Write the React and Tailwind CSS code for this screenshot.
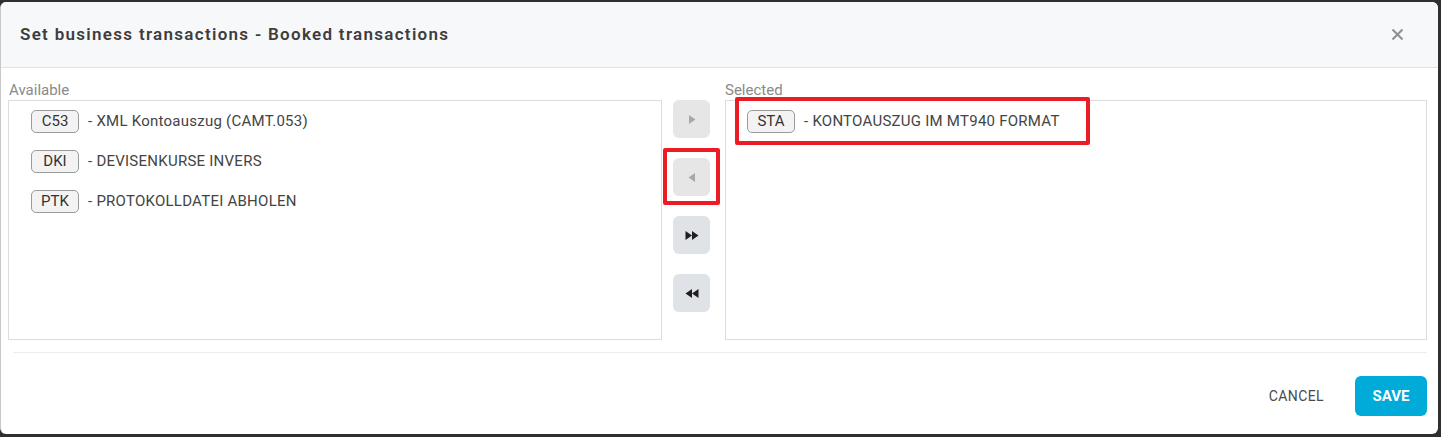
import { useState } from "react";

const available = [
  { code: "C53", label: "XML Kontoauszug (CAMT.053)" },
  { code: "DKI", label: "DEVISENKURSE INVERS" },
  { code: "PTK", label: "PROTOKOLLDATEI ABHOLEN" },
];

const selected = [{ code: "STA", label: "KONTOAUSZUG IM MT940 FORMAT" }];

function Row({ item }) {
  return (
    <div className="h-[40px] flex items-center">
      <span className="h-[23px] min-w-[48px] px-[9px] flex items-center justify-center rounded-[5px] border border-[#9a9a9a] bg-[#f3f3f3] text-[15px] text-[#333]">
        {item.code}
      </span>
      <span className="ml-[9px] text-[15px] tracking-[0.25px] text-[#444]">- {item.label}</span>
    </div>
  );
}

function Single({ dir }) {
  return (
    <svg width="8" height="11" viewBox="0 0 8 11">
      {dir === "right" ? (
        <path d="M1 1 L7.5 5.5 L1 10 Z" fill="#a8a8a8" />
      ) : (
        <path d="M7 1 L0.5 5.5 L7 10 Z" fill="#a8a8a8" />
      )}
    </svg>
  );
}

function Double({ dir }) {
  return (
    <svg width="14" height="11" viewBox="0 0 14 11">
      {dir === "right" ? (
        <>
          <path d="M0.5 1 L7 5.5 L0.5 10 Z" fill="#1f1f1f" />
          <path d="M7 1 L13.5 5.5 L7 10 Z" fill="#1f1f1f" />
        </>
      ) : (
        <>
          <path d="M7 1 L0.5 5.5 L7 10 Z" fill="#1f1f1f" />
          <path d="M13.5 1 L7 5.5 L13.5 10 Z" fill="#1f1f1f" />
        </>
      )}
    </svg>
  );
}

export default function App() {
  const [items] = useState({ available, selected });

  return (
    <div
      className="w-[1441px] h-[437px] bg-[#2f2f2f] pt-[2px] pr-[3px] pb-[3px]"
      style={{ fontFamily: "Roboto, 'Liberation Sans', sans-serif" }}
    >
      <div className="h-full bg-white rounded-[6px] border-l border-[#c8c8c8] flex flex-col overflow-hidden">
        {/* Header */}
        <div className="h-[66px] shrink-0 bg-[#f7f8fa] border-b border-[#dfe2e6] pl-[19px] pr-[34px] flex items-center justify-between">
          <h2 className="text-[17px] font-semibold tracking-[1.3px] text-[#3d3d3d]">
            Set business transactions - Booked transactions
          </h2>
          <button className="w-[14px] h-[14px] flex items-center justify-center">
            <svg width="13" height="13" viewBox="0 0 13 13">
              <path d="M1.5 1.5 L11.5 11.5 M11.5 1.5 L1.5 11.5" stroke="#8f8f8f" strokeWidth="2" />
            </svg>
          </button>
        </div>

        {/* Body */}
        <div className="pl-[7px] pr-[11px] pt-[13px] flex">
          <div className="w-[654px] shrink-0">
            <div className="h-[19px] leading-[18px] text-[15px] text-[#8a8a8a] pl-[1px]">Available</div>
            <div className="h-[240px] border border-[#dcdcdc] pl-[22px]">
              {items.available.map((it) => (
                <Row key={it.code} item={it} />
              ))}
            </div>
          </div>

          <div className="ml-[11px] mr-[15px] w-[37px] shrink-0 pt-[19px] flex flex-col gap-[20px]">
            <button className="h-[38px] w-[37px] rounded-[6px] bg-[#e6e6e6] flex items-center justify-center">
              <Single dir="right" />
            </button>
            <div className="relative">
              <button className="h-[38px] w-[37px] rounded-[6px] bg-[#e6e6e6] flex items-center justify-center">
                <Single dir="left" />
              </button>
              <div className="absolute -left-[10px] -right-[10px] -top-[10px] -bottom-[9px] border-[4px] border-[#ec1c24] rounded-[2px]" />
            </div>
            <button className="h-[38px] w-[37px] rounded-[6px] bg-[#dfe2e7] flex items-center justify-center">
              <Double dir="right" />
            </button>
            <button className="h-[38px] w-[37px] rounded-[6px] bg-[#dfe2e7] flex items-center justify-center">
              <Double dir="left" />
            </button>
          </div>

          <div className="flex-1">
            <div className="h-[19px] leading-[18px] text-[15px] text-[#8a8a8a]">Selected</div>
            <div className="relative h-[240px] border border-[#dcdcdc] pl-[21px]">
              {items.selected.map((it) => (
                <Row key={it.code} item={it} />
              ))}
              <div className="absolute left-[9px] top-[-4px] w-[355px] h-[48px] border-[4px] border-[#ec1c24] rounded-[2px]" />
            </div>
          </div>
        </div>

        <div className="ml-[12px] mr-[11px] mt-[12px] border-t border-[#ececec]" />

        {/* Footer */}
        <div className="flex items-center justify-end pr-[11px] pt-[23px]">
          <button className="text-[14px] text-[#4a4a4a] tracking-[0.4px] mr-[31px]">CANCEL</button>
          <button className="h-[40px] w-[72px] rounded-[6px] bg-[#00aad9] text-white text-[15px] font-bold">
            SAVE
          </button>
        </div>
      </div>
    </div>
  );
}
